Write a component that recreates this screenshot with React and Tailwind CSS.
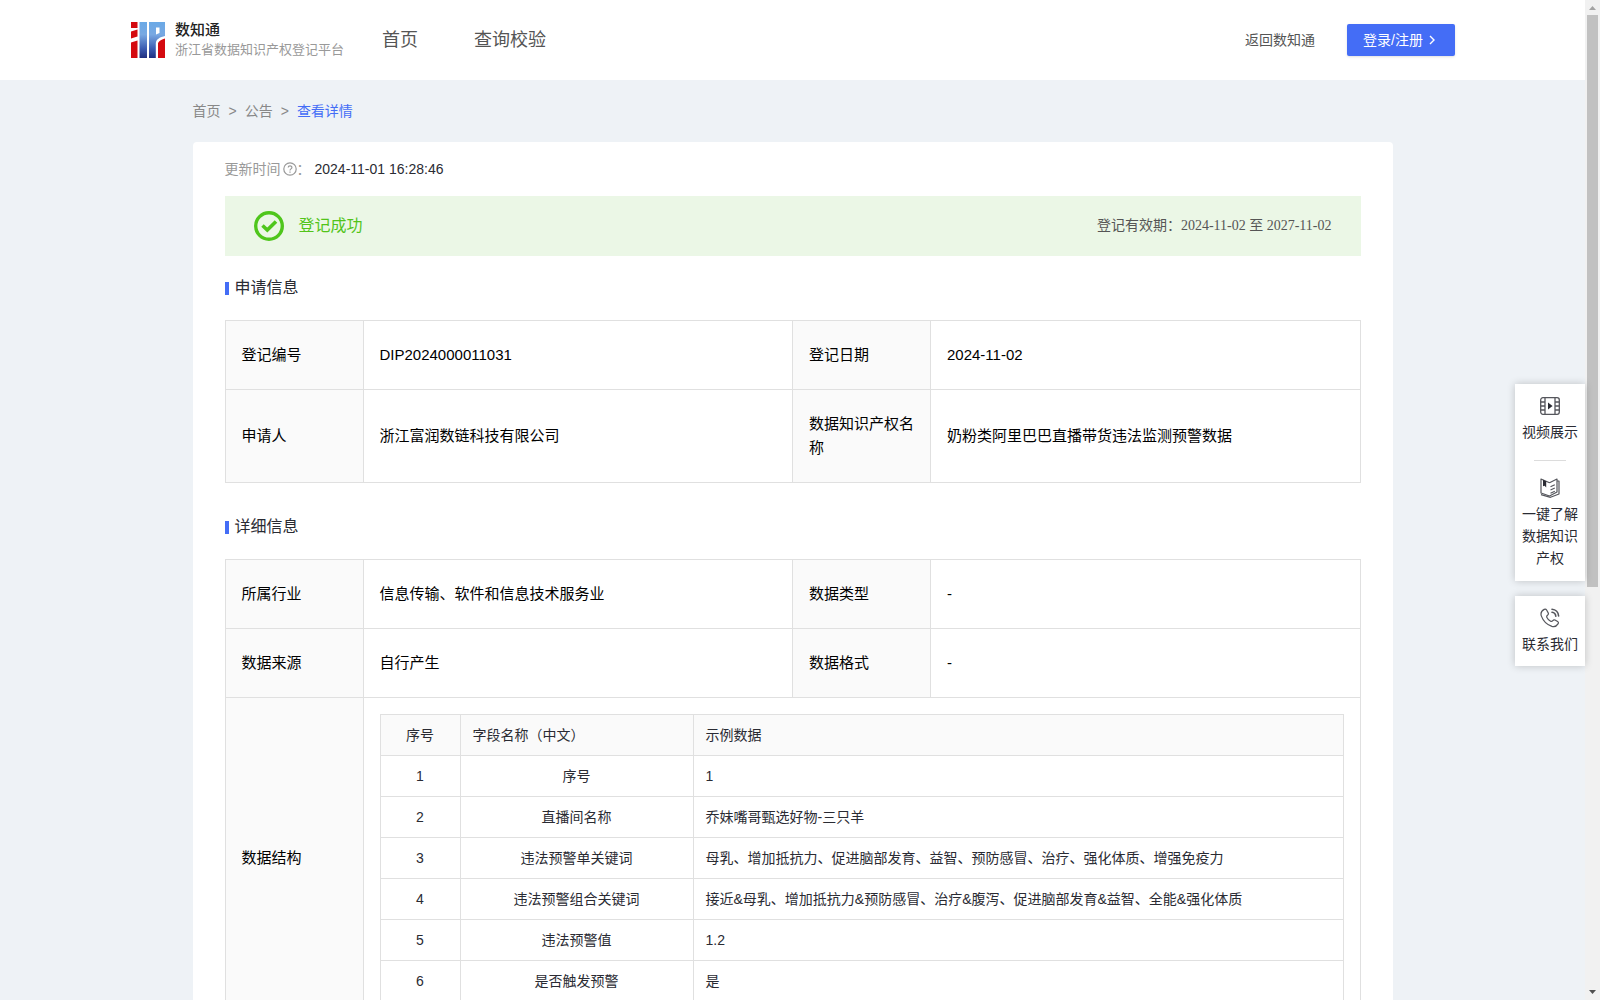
import React from "react";

const infoRows = [
  [
    ["登记编号", "DIP2024000011031"],
    ["登记日期", "2024-11-02"],
  ],
  [
    ["申请人", "浙江富润数链科技有限公司"],
    ["数据知识产权名称", "奶粉类阿里巴巴直播带货违法监测预警数据"],
  ],
];

const detailRows = [
  [
    ["所属行业", "信息传输、软件和信息技术服务业"],
    ["数据类型", "-"],
  ],
  [
    ["数据来源", "自行产生"],
    ["数据格式", "-"],
  ],
];

const fields = [
  ["1", "序号", "1"],
  ["2", "直播间名称", "乔妹嘴哥甄选好物-三只羊"],
  ["3", "违法预警单关键词", "母乳、增加抵抗力、促进脑部发育、益智、预防感冒、治疗、强化体质、增强免疫力"],
  ["4", "违法预警组合关键词", "接近&母乳、增加抵抗力&预防感冒、治疗&腹泻、促进脑部发育&益智、全能&强化体质"],
  ["5", "违法预警值", "1.2"],
  ["6", "是否触发预警", "是"],
];

function Logo() {
  return (
    <svg width="34" height="36" viewBox="0 0 34 36" aria-hidden="true">
      <defs>
        <linearGradient id="logoBlue" x1="0" y1="0" x2="0" y2="1">
          <stop offset="0" stopColor="#6aa9e6" />
          <stop offset="0.35" stopColor="#78a8e2" />
          <stop offset="0.75" stopColor="#3a5ab0" />
          <stop offset="1" stopColor="#1f2f80" />
        </linearGradient>
      </defs>
      <rect x="0" y="0" width="6.5" height="6" fill="#d40a10" />
      <path d="M0 9.500L6.500 7.500V14.500L0 16.500Z" fill="#d40a10" />
      <path d="M0 20.500L6.500 18.500V36H0Z" fill="#d40a10" />
      <rect x="8.500" y="0" width="7.500" height="36" fill="url(#logoBlue)" />
      <path d="M18 0H34V14C29 15 25.500 17 24.800 21V36H18Z" fill="url(#logoBlue)" />
      <path d="M25 5.500H28.500V11L25 12.500Z" fill="#fff" />
      <path d="M27 36V21C28 18.500 31 17.500 34 16.500V36Z" fill="#d40a10" />
    </svg>
  );
}

function FilmIcon() {
  return (
    <svg width="20" height="18" viewBox="0 0 20 18" fill="none" stroke="#55565c" strokeWidth="1.3" aria-hidden="true">
      <rect x="0.7" y="0.7" width="18.6" height="16.6" rx="2.2" />
      <path d="M5 0.7V17.3M15 0.7V17.3M0.7 5H5M0.7 9H5M0.7 13H5M15 5H19.3M15 9H19.3M15 13H19.3" />
      <path d="M8 5.6L12.6 9L8 12.4Z" fill="#2a2b33" stroke="none" />
    </svg>
  );
}

function BookIcon() {
  return (
    <svg width="20" height="20" viewBox="0 0 20 20" fill="none" stroke="#55565c" strokeWidth="1.2" strokeLinejoin="round" aria-hidden="true">
      <path d="M9.5 4.8L1 1V15L9.5 18L17 14V1L9.500 4.800" />
      <path d="M17 3H19V16L10.5 19.3L1 16.6" />
      <path d="M10.500 8.700L14.800 6.800M10.500 12L14.800 10M10.500 15.200L14.800 13.200" />
      <path d="M3 1.8L6.200 3.2V9.500L4.600 7.800L3 8.200Z" fill="#2a2b33" stroke="none" />
    </svg>
  );
}

function PhoneIcon() {
  return (
    <svg width="20" height="20" viewBox="0 0 20 20" fill="none" stroke="#55565c" strokeWidth="1.2" strokeLinecap="round" strokeLinejoin="round" aria-hidden="true">
      <path d="M4.2 1.4C5.3 0.8 6 1 6.6 2L8.2 4.9C8.7 5.9 8.4 6.6 7.5 7.2C6.6 7.9 6.4 8.4 6.9 9.4C7.8 11.2 8.8 12.2 10.6 13.2C11.6 13.7 12.1 13.5 12.8 12.6C13.4 11.8 14.1 11.5 15 12L17.6 13.6C18.5 14.2 18.7 14.9 18 15.9C16.6 18.2 14.5 19.2 11.9 18.4C6.9 16.7 3.2 13 1.4 8.1C0.4 5.3 1.6 2.8 4.2 1.4Z" />
      <path d="M12 1.300C15.700 1.600 18.400 4.400 18.600 8" strokeWidth="1.6" />
      <path d="M12 4.300C14.300 4.600 15.600 6 15.800 8.200" strokeWidth="1.6" />
    </svg>
  );
}

function SectionTitle({ children }) {
  return (
    <h2 className="flex h-16 items-center gap-[6px] text-base text-[#2a2b33]">
      <span className="h-[13px] w-1 bg-[#446df6]" />
      {children}
    </h2>
  );
}

function PairRow({ pairs }) {
  return (
    <tr>
      {pairs.map(([label, value]) => (
        <React.Fragment key={label}>
          <th scope="row" className="border border-[#e0e0e0] bg-[#fafafa] px-4 py-[22px] text-left font-normal">
            {label}
          </th>
          <td className="border border-[#e0e0e0] px-4 py-[22px]">{value}</td>
        </React.Fragment>
      ))}
    </tr>
  );
}

function InfoTable({ rows, children }) {
  return (
    <table className="w-full table-fixed border-collapse text-[15px] leading-6 text-black">
      <colgroup>
        <col className="w-[138px]" />
        <col />
        <col className="w-[138px]" />
        <col />
      </colgroup>
      <tbody>
        {rows.map((pairs) => (
          <PairRow key={pairs[0][0]} pairs={pairs} />
        ))}
        {children}
      </tbody>
    </table>
  );
}

function FieldTable() {
  const cell = "border border-[#e0e0e0] px-3 py-2";
  return (
    <table className="w-full table-fixed border-collapse text-sm leading-6 text-[#2a2b33]">
      <colgroup>
        <col className="w-20" />
        <col className="w-[233px]" />
        <col />
      </colgroup>
      <thead className="bg-[#fafafa]">
        <tr>
          <th className={cell + " text-center font-normal"}>序号</th>
          <th className={cell + " text-left font-normal"}>字段名称（中文）</th>
          <th className={cell + " text-left font-normal"}>示例数据</th>
        </tr>
      </thead>
      <tbody>
        {fields.map(([no, name, sample]) => (
          <tr key={no}>
            <td className={cell + " text-center"}>{no}</td>
            <td className={cell + " text-center"}>{name}</td>
            <td className={cell}>{sample}</td>
          </tr>
        ))}
      </tbody>
    </table>
  );
}

function Header() {
  return (
    <header className="flex h-20 items-center justify-between bg-white pr-[130px] pl-[131px] text-[#555]">
      <div className="flex items-center">
        <a href="#" className="flex w-[251px] items-center gap-[10px]">
          <Logo />
          <span className="flex flex-col whitespace-nowrap">
            <span className="text-[15px] leading-5 font-medium text-[#222]">数知通</span>
            <span className="text-[13px] leading-5 text-[#999]">浙江省数据知识产权登记平台</span>
          </span>
        </a>
        <nav className="flex gap-14 text-lg">
          <a href="#">首页</a>
          <a href="#">查询校验</a>
        </nav>
      </div>
      <div className="flex items-center gap-8 text-sm">
        <a href="#">返回数知通</a>
        <button type="button" className="flex h-8 w-[108px] items-center gap-1 rounded-xs bg-[#446df6] px-4 text-white shadow-sm">
          登录/注册
          <svg width="10" height="10" viewBox="0 0 10 10" fill="none" stroke="currentColor" strokeWidth="1.4" aria-hidden="true">
            <path d="M3 1L7 5L3 9" />
          </svg>
        </button>
      </div>
    </header>
  );
}

function SideButton({ icon, children }) {
  return (
    <button type="button" className="flex w-full flex-col items-center px-[7px]">
      <span className="flex h-5 items-center">{icon}</span>
      <span className="mt-[5px] leading-[22px]">{children}</span>
    </button>
  );
}

function SideTools() {
  return (
    <aside className="absolute top-96 right-[15px] flex w-[70px] flex-col gap-[15px] text-sm text-[#2a2b33]">
      <div className="bg-white py-3 shadow-[0_0_8px_rgba(0,0,0,0.2)]">
        <SideButton icon={<FilmIcon />}>视频展示</SideButton>
        <hr className="mx-auto my-[17px] w-8 border-[#dcdcdc]" />
        <SideButton icon={<BookIcon />}>一键了解数据知识产权</SideButton>
      </div>
      <div className="bg-white pt-3 pb-[11px] shadow-[0_0_8px_rgba(0,0,0,0.2)]">
        <SideButton icon={<PhoneIcon />}>联系我们</SideButton>
      </div>
    </aside>
  );
}

function ScrollRail() {
  return (
    <div className="flex w-[15px] shrink-0 flex-col items-center bg-[#f1f1f1]" aria-hidden="true">
      <svg className="h-[15px] w-[15px] shrink-0" viewBox="0 0 15 15">
        <path d="M4 10L7.5 6L11 10Z" fill="#a3a3a3" />
      </svg>
      <div className="min-h-0 w-full flex-1 px-[2px]">
        <div className="h-[59%] w-full bg-[#c1c1c1]" />
      </div>
      <svg className="h-[15px] w-[15px] shrink-0" viewBox="0 0 15 15">
        <path d="M4 5L7.5 9L11 5Z" fill="#505050" />
      </svg>
    </div>
  );
}

export default function App() {
  return (
    <div className="relative flex h-screen overflow-hidden bg-[#eef2f6] font-['Liberation_Sans','Noto_Sans_CJK_SC',sans-serif]">
      <div className="min-w-0 flex-1 overflow-y-auto [scrollbar-width:none]">
        <Header />
        <main className="mx-auto max-w-[1200px] pb-10">
          <nav className="flex h-[62px] items-center gap-2 text-sm text-[#888]" aria-label="breadcrumb">
            <a href="#">首页</a>
            <span>&gt;</span>
            <a href="#">公告</a>
            <span>&gt;</span>
            <a href="#" className="text-[#446df6]">查看详情</a>
          </nav>
          <article className="rounded-sm bg-white px-8 pb-8">
            <div className="flex h-[54px] items-center text-sm text-[#999]">
              更新时间
              <svg className="ml-[2px]" width="14" height="14" viewBox="0 0 14 14" fill="none" stroke="#999" strokeWidth="1.2" aria-hidden="true">
                <circle cx="7" cy="7" r="6.2" />
                <path d="M5.2 5.6C5.2 3.4 8.9 3.4 8.9 5.5C8.9 6.9 7 6.9 7 8.5M7 9.5V10.7" />
              </svg>
              ：
              <time className="ml-1 text-[#2a2b33]">2024-11-01 16:28:46</time>
            </div>
            <div className="flex h-[60px] items-center justify-between bg-[#ebf7e6] pr-[29px] pl-[29px]">
              <div className="flex items-center gap-[15px] text-base text-[#52c41a]">
                <svg width="30" height="30" viewBox="0 0 30 30" fill="none" stroke="#4fc61c" aria-hidden="true">
                  <circle cx="15" cy="15" r="13.3" strokeWidth="3.4" />
                  <path d="M8.5 14.5L13.3 19L22 10.5" strokeWidth="3.6" />
                </svg>
                登记成功
              </div>
              <div className="font-['Liberation_Serif','Noto_Sans_CJK_SC',serif] text-sm text-[#555]">
                登记有效期：2024-11-02 至 2027-11-02
              </div>
            </div>
            <SectionTitle>申请信息</SectionTitle>
            <InfoTable rows={infoRows} />
            <div className="pt-3">
              <SectionTitle>详细信息</SectionTitle>
            </div>
            <InfoTable rows={detailRows}>
              <tr>
                <th scope="row" className="border border-[#e0e0e0] bg-[#fafafa] px-4 text-left font-normal">
                  数据结构
                </th>
                <td colSpan={3} className="border border-[#e0e0e0] p-4">
                  <FieldTable />
                </td>
              </tr>
            </InfoTable>
          </article>
        </main>
      </div>
      <SideTools />
      <ScrollRail />
    </div>
  );
}
